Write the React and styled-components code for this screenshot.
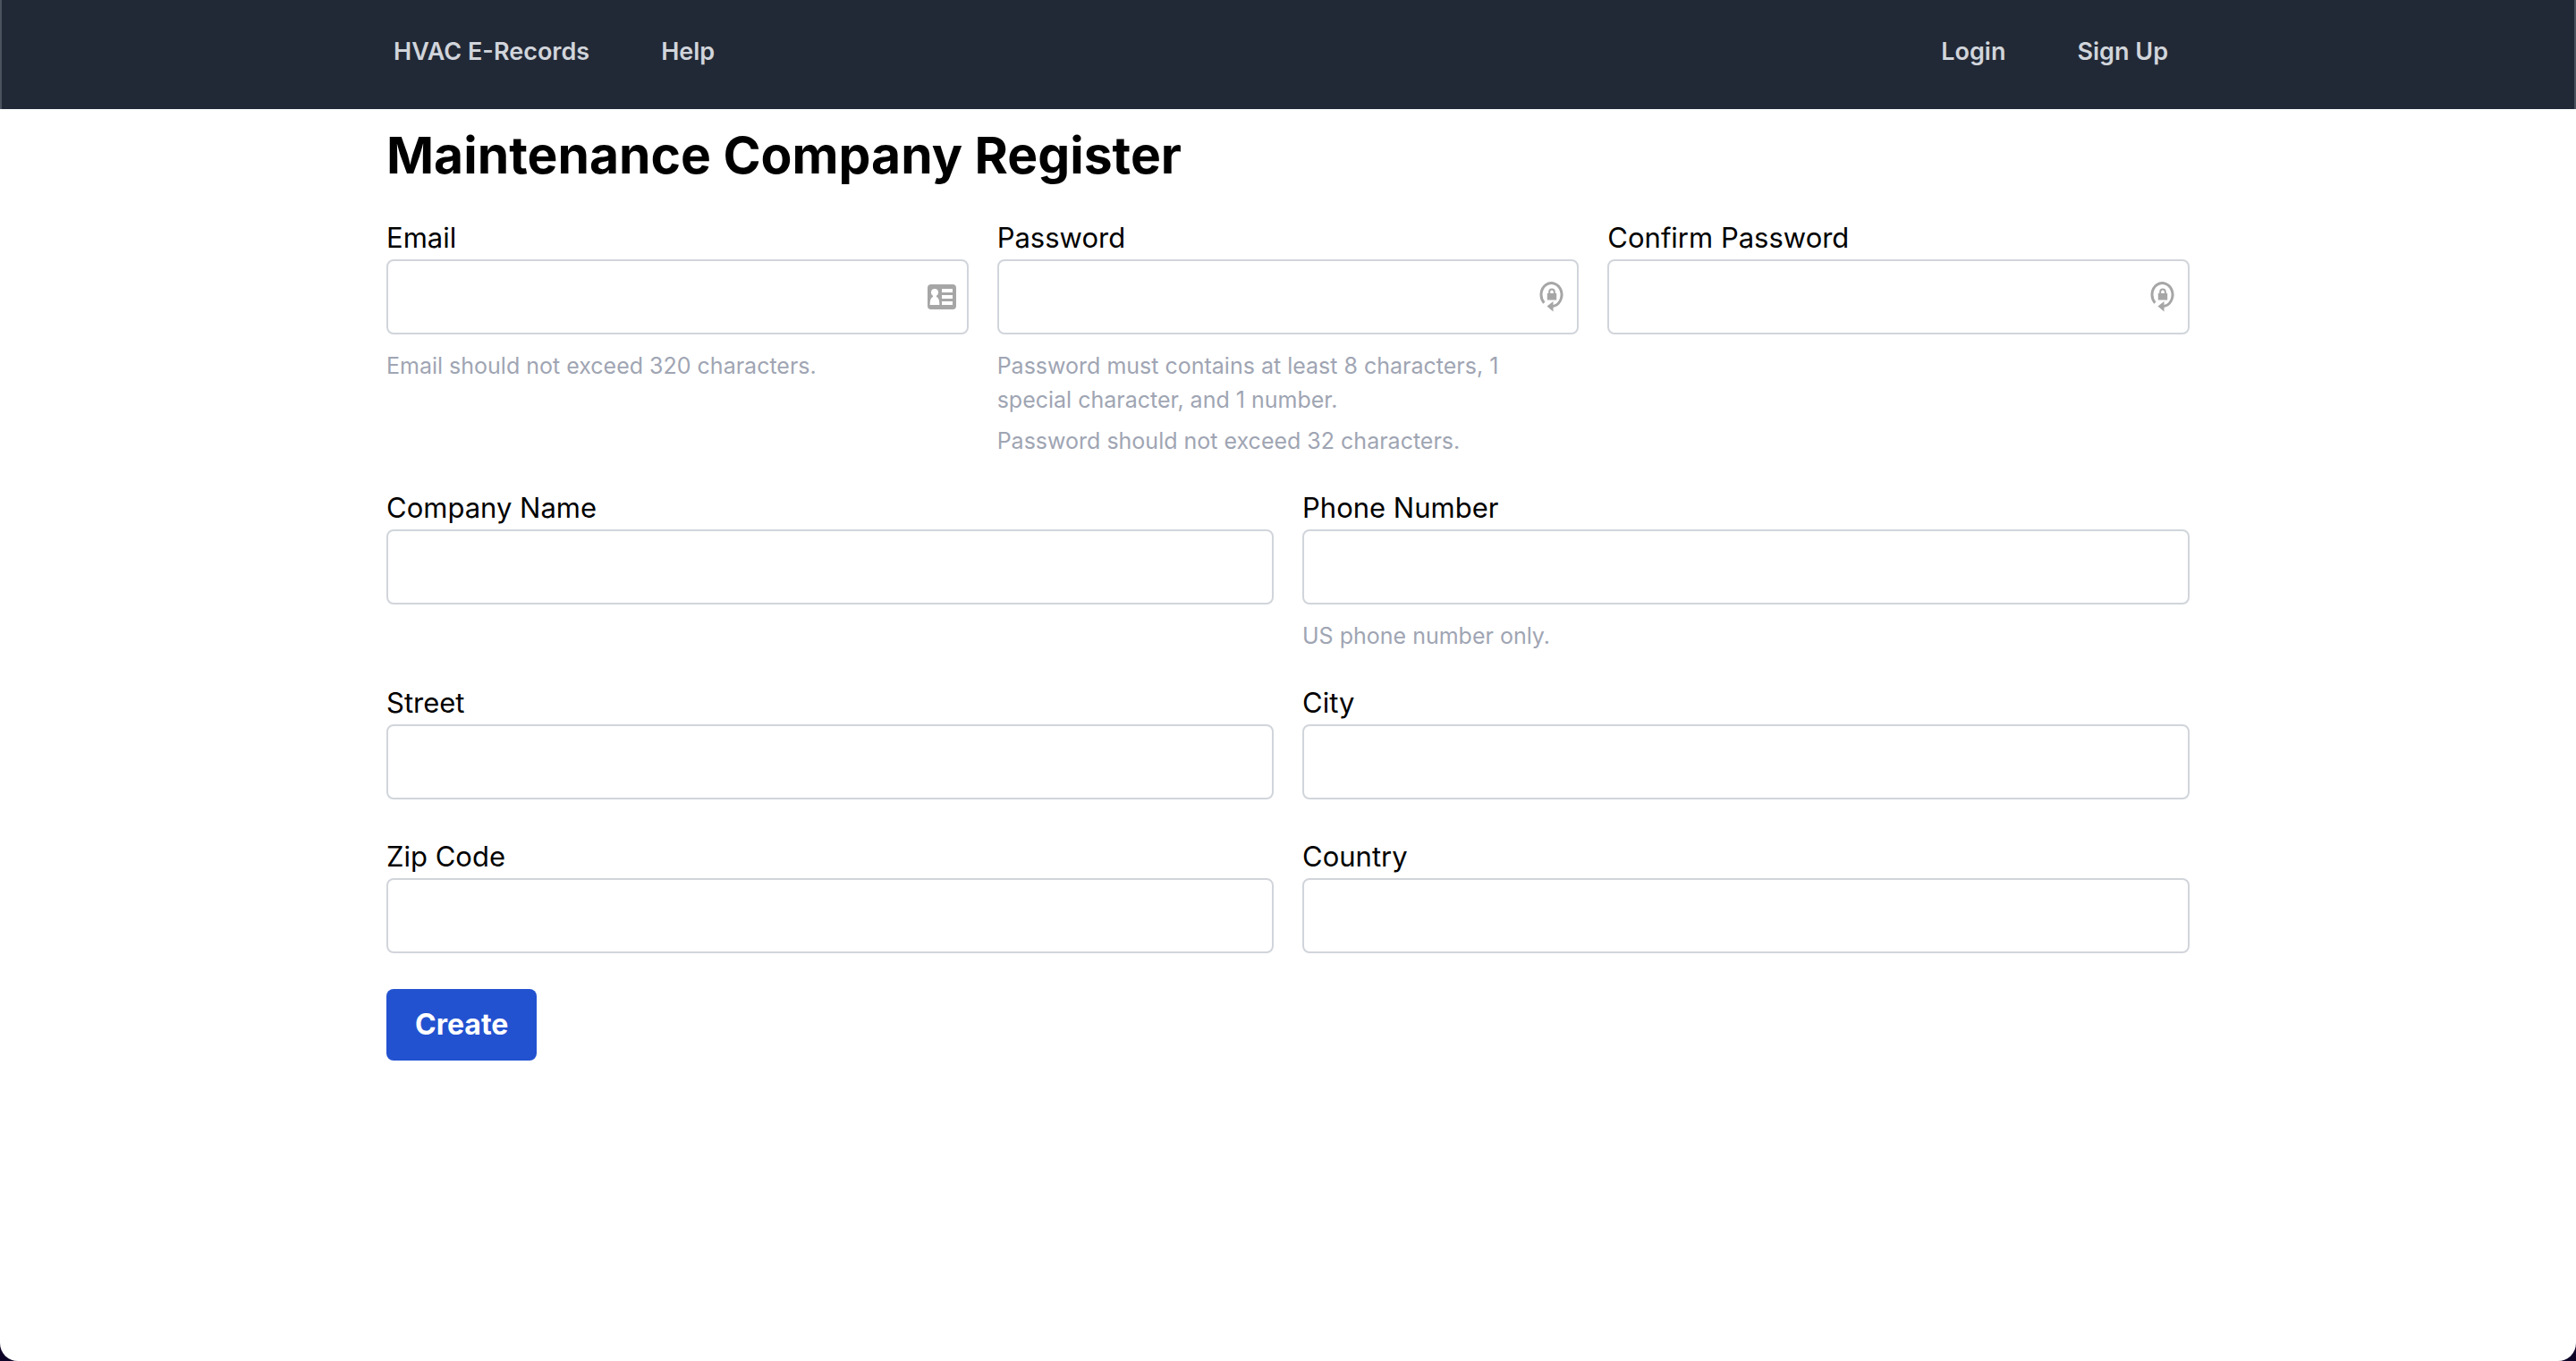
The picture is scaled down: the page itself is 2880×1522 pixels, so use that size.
import React from "react";
import styled, { createGlobalStyle } from "styled-components";

const GlobalStyle = createGlobalStyle`
  *, *::before, *::after { box-sizing: border-box; }
  body {
    margin: 0;
    background: #0e0428;
    color: #000;
    font-family: Inter, "Liberation Sans", sans-serif;
    font-size: 31px;
    line-height: 48px;
  }
`;

const Page = styled.div`
  min-height: 100vh;
  background: #fff;
  border-radius: 0 0 20px 20px;
  overflow: hidden;
`;

const Header = styled.header`
  background: #222936;
  border: solid #4b535f;
  border-width: 0 2px;
  padding: 34px 0 40px;
`;

const Container = styled.div`
  width: 70vw;
  margin: 0 auto;
`;

const Nav = styled(Container).attrs({ as: "nav" })`
  display: flex;
  justify-content: space-between;
  padding: 0 24px 0 8px;
`;

const NavGroup = styled.div`
  display: flex;
  gap: 80px;
`;

const NavLink = styled.a`
  color: #d1d5db;
  font-size: 27px;
  font-weight: 600;
  text-decoration: none;
`;

const Main = styled(Container).attrs({ as: "main" })`
  padding: 16px 0;
`;

const Title = styled.h1`
  margin: 0 0 32px;
  font-size: 57px;
  font-weight: 700;
  line-height: 72px;
`;

const Form = styled.form`
  display: flex;
  flex-direction: column;
  align-items: stretch;
  gap: 32px;
`;

const Row = styled.div`
  display: grid;
  grid-template-columns: repeat(${(p) => p.$columns}, 1fr);
  gap: 32px;
`;

const FieldBox = styled.div`
  display: flex;
  flex-direction: column;
  gap: 8px;
  padding-bottom: ${(p) => (p.$hasHints ? 0 : 8)}px;
`;

const Label = styled.label`
  display: block;
`;

const Control = styled.div`
  display: flex;
  align-items: center;
  height: 84px;
  padding-right: 12px;
  border: 2px solid #d1d5db;
  border-radius: 8px;
  background: #fff;
`;

const Input = styled.input`
  flex: 1;
  min-width: 0;
  height: 100%;
  padding: 0 24px;
  border: 0;
  outline: 0;
  background: transparent;
  font: inherit;
`;

const Hints = styled.div`
  display: flex;
  flex-direction: column;
  gap: 8px;
  padding-top: 8px;
`;

const Hint = styled.p`
  margin: 0;
  color: #9fa5b3;
  font-size: 25px;
  line-height: 38px;
`;

const SubmitButton = styled.button`
  align-self: flex-start;
  padding: 16px 32px;
  border: 0;
  border-radius: 8px;
  background: #2352d0;
  color: #fff;
  font: inherit;
  font-size: 32px;
  font-weight: 700;
  cursor: pointer;
`;

const ContactIcon = () => (
  <svg width="32" height="28" viewBox="0 0 32 28" aria-hidden="true">
    <rect width="32" height="28" rx="4" fill="#a6a6a6" />
    <circle cx="8" cy="9" r="4" fill="#fff" />
    <path d="M6 11h4v3q3.400 1 3.400 9H2.600q0-8 3.400-9z" fill="#fff" />
    <path d="M16 5h12v4H16zM16 12h12v4H16zM16 19h12v4H16z" fill="#fff" />
  </svg>
);

const PasswordIcon = () => (
  <svg width="32" height="34" viewBox="-3 0 32 34" aria-hidden="true">
    <path d="M4.300 23.700A11.500 13 0 1 1 14 27.500" fill="none" stroke="#a6a6a6" strokeWidth="3" />
    <path d="M7.500 27.500 14.500 22v11.500z" fill="#a6a6a6" />
    <path d="M7.800 13h10.400v7.500H7.800z" fill="#a6a6a6" />
    <path d="M10.200 13.500v-2a2.800 3 0 0 1 5.600 0v2" fill="none" stroke="#a6a6a6" strokeWidth="2" />
  </svg>
);

const icons = { contact: ContactIcon, password: PasswordIcon };

const rows = [
  [
    {
      id: "email",
      label: "Email",
      type: "email",
      icon: "contact",
      hints: ["Email should not exceed 320 characters."],
    },
    {
      id: "password",
      label: "Password",
      type: "password",
      icon: "password",
      hints: [
        "Password must contains at least 8 characters, 1 special character, and 1 number.",
        "Password should not exceed 32 characters.",
      ],
    },
    { id: "confirm-password", label: "Confirm Password", type: "password", icon: "password" },
  ],
  [
    { id: "company", label: "Company Name" },
    { id: "phone", label: "Phone Number", type: "tel", hints: ["US phone number only."] },
  ],
  [
    { id: "street", label: "Street" },
    { id: "city", label: "City" },
  ],
  [
    { id: "zip", label: "Zip Code" },
    { id: "country", label: "Country" },
  ],
];

function Field({ id, label, type = "text", icon, hints }) {
  const Icon = icons[icon];
  return (
    <FieldBox $hasHints={Boolean(hints)}>
      <div>
        <Label htmlFor={id}>{label}</Label>
        <Control>
          <Input id={id} name={id} type={type} />
          {Icon && <Icon />}
        </Control>
      </div>
      {hints && (
        <Hints>
          {hints.map((text) => (
            <Hint key={text}>{text}</Hint>
          ))}
        </Hints>
      )}
    </FieldBox>
  );
}

export default function App() {
  return (
    <Page>
      <GlobalStyle />
      <Header>
        <Nav>
          <NavGroup>
            <NavLink href="#home">HVAC E-Records</NavLink>
            <NavLink href="#help">Help</NavLink>
          </NavGroup>
          <NavGroup>
            <NavLink href="#login">Login</NavLink>
            <NavLink href="#signup">Sign Up</NavLink>
          </NavGroup>
        </Nav>
      </Header>
      <Main>
        <Title>Maintenance Company Register</Title>
        <Form onSubmit={(e) => e.preventDefault()}>
          {rows.map((fields) => (
            <Row key={fields[0].id} $columns={fields.length}>
              {fields.map((field) => (
                <Field key={field.id} {...field} />
              ))}
            </Row>
          ))}
          <SubmitButton type="submit">Create</SubmitButton>
        </Form>
      </Main>
    </Page>
  );
}
